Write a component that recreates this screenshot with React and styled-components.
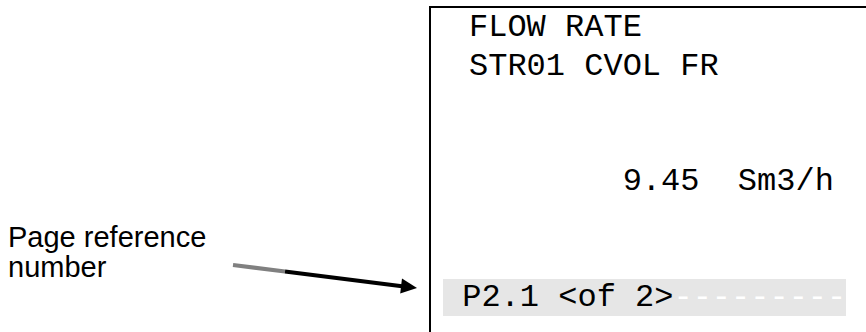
import styled, { createGlobalStyle } from "styled-components";

const GlobalStyle = createGlobalStyle`
  html, body {
    margin: 0;
    padding: 0;
    background: #ffffff;
  }
`;

const Page = styled.div`
  display: flex;
  height: 332px;
  overflow: hidden;
`;

const Annotation = styled.div`
  display: flex;
  align-items: flex-start;
  width: 429px;
  flex: 0 0 429px;
  box-sizing: border-box;
  padding: 222px 0 0 8px;
`;

const Label = styled.div`
  flex: 0 0 222px;
  font-family: "Liberation Sans", Arial, sans-serif;
  font-size: 29px;
  line-height: 30px;
  color: #000;
`;

const Arrow = styled.svg`
  display: block;
  margin-top: 38px;
  flex: 0 0 auto;
`;

const Screen = styled.div`
  flex: 1;
  margin-top: 6px;
  padding-top: 1px;
  border-top: 2px solid #000;
  border-left: 2px solid #000;
  font-family: "Liberation Mono", "Courier New", monospace;
  font-size: 32px;
  color: #000;
`;

const Line = styled.div`
  height: 38.6px;
  line-height: 38.6px;
  white-space: pre;
  padding-left: ${(p) => p.$indent}px;
`;

const Highlight = styled.span`
  background: #e6e6e6;
`;

const Dashes = styled.span`
  color: #ffffff;
`;

export default function App() {
  return (
    <>
      <GlobalStyle />
      <Page>
        <Annotation>
          <Label>
            Page reference
            <br />
            number
          </Label>
          <Arrow width="190" height="36" viewBox="0 0 190 36">
            <line x1="3" y1="5" x2="55" y2="11.5" stroke="#808080" strokeWidth="4" />
            <line x1="55" y1="11.5" x2="174" y2="26.4" stroke="#000" strokeWidth="4" />
            <polygon points="187,28 170.2,33.4 172,18.6" fill="#000" />
          </Arrow>
        </Annotation>
        <Screen>
          <Line $indent={38}>FLOW RATE</Line>
          <Line $indent={38}>STR01 CVOL FR</Line>
          <Line $indent={38} />
          <Line $indent={38} />
          <Line $indent={38}>{"        9.45  Sm3/h"}</Line>
          <Line $indent={38} />
          <Line $indent={38} />
          <Line $indent={12}>
            <Highlight>
              {" P2.1 <of 2>"}
              <Dashes>---------</Dashes>
            </Highlight>
          </Line>
        </Screen>
      </Page>
    </>
  );
}
